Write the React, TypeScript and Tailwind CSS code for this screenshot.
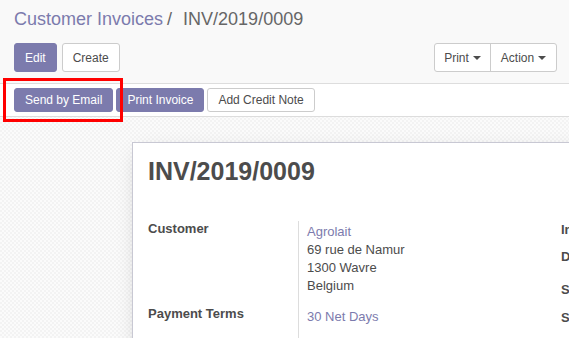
const btnPrimary =
  "h-[24px] rounded-[3px] border border-[#7c7bad] bg-[#7c7bad] px-[10px] text-[12px] leading-[18px] text-white";
const btnDefault =
  "h-[24px] rounded-[3px] border border-[#cccccc] bg-white px-[10px] text-[12px] leading-[18px] text-[#4c4c4c]";

function Caret() {
  return (
    <svg width="8" height="4" viewBox="0 0 8 4" className="ml-[4px] inline-block">
      <path d="M0 0h8L4 4z" fill="#4c4c4c" />
    </svg>
  );
}

function ControlPanel() {
  return (
    <div className="h-[84px] border-b border-[#dddddd] bg-[#f9f9f9] px-[14px] pt-[6px]">
      <div className="flex h-[27px] items-center text-[18px] leading-[27px]">
        <span className="text-[#7c7bad]">Customer Invoices</span>
        <span className="pl-[4px] text-[#666666]">/</span>
        <span className="ml-[11px] text-[#666666]">INV/2019/0009</span>
      </div>
      <div className="mt-[10px] flex items-center justify-between pr-[-2px]">
        <div className="flex gap-[5px]">
          <button className="h-[29px] rounded-[3px] border border-[#7c7bad] bg-[#7c7bad] px-[10px] text-[12px] text-white">
            Edit
          </button>
          <button className="h-[29px] rounded-[3px] border border-[#cccccc] bg-white px-[10px] text-[12px] text-[#4c4c4c]">
            Create
          </button>
        </div>
        <div className="mr-[-2px] flex h-[29px] rounded-[3px] border border-[#cccccc] bg-white text-[12px] text-[#4c4c4c]">
          <button className="flex w-[56px] items-center justify-center border-r border-[#cccccc]">
            Print
            <Caret />
          </button>
          <button className="flex w-[65px] items-center justify-center">
            Action
            <Caret />
          </button>
        </div>
      </div>
    </div>
  );
}

function StatusBar() {
  return (
    <div className="flex h-[33px] items-start gap-[3px] border-b border-[#dddddd] bg-white px-[14px] pt-[4px]">
      <button className={btnPrimary}>Send by Email</button>
      <button className={btnPrimary}>Print Invoice</button>
      <button className={btnDefault}>Add Credit Note</button>
    </div>
  );
}

function Sheet() {
  return (
    <div className="ml-[132px] mt-[25px] w-[760px] border border-[#c8c8d3] bg-white pb-[40px] pl-[15px] pt-[13px] text-[13px] leading-[18px] text-[#4c4c4c] shadow-[0_5px_20px_-8px_rgba(0,0,0,0.25)]">
      <h1 className="text-[25px] font-bold leading-[30px]">INV/2019/0009</h1>
      <div className="mt-[34px] flex">
        <div className="flex w-[413px]">
          <div className="w-[150px] font-bold">
            <div>Customer</div>
            <div className="mt-[67px]">Payment Terms</div>
          </div>
          <div className="mt-[1px] h-[140px] flex-1 border-l border-[#dddddd] pl-[8px] pt-[2px]">
            <div className="text-[#7c7bad]">Agrolait</div>
            <div>69 rue de Namur</div>
            <div>1300 Wavre</div>
            <div>Belgium</div>
            <div className="mt-[13px] text-[#7c7bad]">30 Net Days</div>
          </div>
        </div>
        <div className="font-bold">
          <div className="mt-[1px]">Invoice Date</div>
          <div className="mt-[9px]">Due Date</div>
          <div className="mt-[15px]">Salesperson</div>
          <div className="mt-[10px]">Sales Team</div>
        </div>
      </div>
    </div>
  );
}

export default function App() {
  return (
    <div className="relative h-[338px] w-[569px] overflow-hidden bg-[repeating-conic-gradient(#f3f3f3_0_25%,#fbfbfb_0_50%)] bg-[length:4px_4px] font-['Liberation_Sans',Arial,sans-serif]">
      <ControlPanel />
      <StatusBar />
      <Sheet />
      <div className="absolute left-[3px] top-[78px] h-[44px] w-[120px] border-[3px] border-[#ff0000]" />
    </div>
  );
}
